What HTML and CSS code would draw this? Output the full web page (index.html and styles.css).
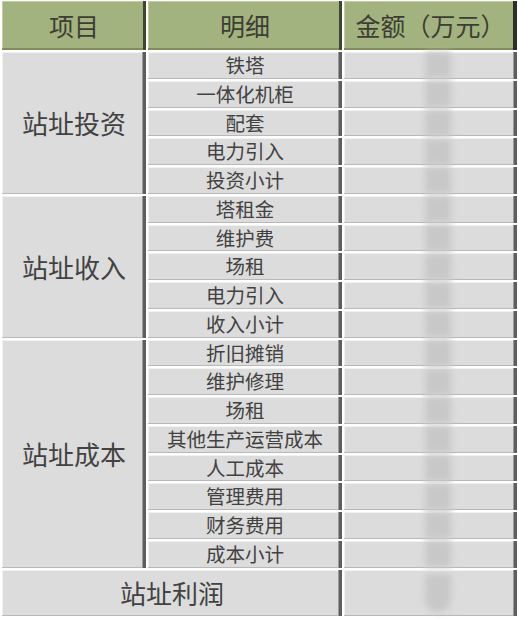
FILE: index.html
```html
<!DOCTYPE html>
<html lang="zh">
<head>
<meta charset="utf-8">
<title>站址收益</title>
<link rel="stylesheet" href="styles.css">
</head>
<body>
<div class="sheet">
  <div class="cell head">项目</div>
  <div class="cell head">明细</div>
  <div class="cell head last">金额（万元）</div>

  <div class="cell group g1">站址投资</div>
  <div class="cell item">铁塔</div><div class="cell val"><span class="redact"></span></div>
  <div class="cell item">一体化机柜</div><div class="cell val"><span class="redact"></span></div>
  <div class="cell item">配套</div><div class="cell val"><span class="redact"></span></div>
  <div class="cell item">电力引入</div><div class="cell val"><span class="redact"></span></div>
  <div class="cell item">投资小计</div><div class="cell val"><span class="redact"></span></div>

  <div class="cell group g2">站址收入</div>
  <div class="cell item">塔租金</div><div class="cell val"><span class="redact"></span></div>
  <div class="cell item">维护费</div><div class="cell val"><span class="redact"></span></div>
  <div class="cell item">场租</div><div class="cell val"><span class="redact"></span></div>
  <div class="cell item">电力引入</div><div class="cell val"><span class="redact"></span></div>
  <div class="cell item">收入小计</div><div class="cell val"><span class="redact"></span></div>

  <div class="cell group g3">站址成本</div>
  <div class="cell item">折旧摊销</div><div class="cell val"><span class="redact"></span></div>
  <div class="cell item">维护修理</div><div class="cell val"><span class="redact"></span></div>
  <div class="cell item">场租</div><div class="cell val"><span class="redact"></span></div>
  <div class="cell item">其他生产运营成本</div><div class="cell val"><span class="redact"></span></div>
  <div class="cell item">人工成本</div><div class="cell val"><span class="redact"></span></div>
  <div class="cell item">管理费用</div><div class="cell val"><span class="redact"></span></div>
  <div class="cell item">财务费用</div><div class="cell val"><span class="redact"></span></div>
  <div class="cell item">成本小计</div><div class="cell val"><span class="redact"></span></div>

  <div class="cell total">站址利润</div>
  <div class="cell val"><span class="redact tall"></span></div>
</div>
</body>
</html>
```

FILE: styles.css
```css
html, body {
  margin: 0;
  padding: 0;
  background: #ffffff;
}

body {
  font-family: "Noto Sans CJK SC", "Noto Sans", sans-serif;
  color: #424242;
  width: 519px;
  height: 619px;
  overflow: hidden;
}

.sheet {
  display: grid;
  grid-template-columns: 144px 194px 173px;
  grid-template-rows: 49px repeat(18, 26.75px) 46px;
  gap: 2px;
  padding: 1px 0 0 2px;
}

.cell {
  display: flex;
  align-items: center;
  justify-content: center;
  background: #dcdcdc;
  box-shadow:
    inset -3px 0 0 #5e5e5e,
    inset -4px 0 0 #9a9a9a,
    inset 0 -1px 0 #b8b8b8,
    inset 1px 1px 0 #f2f2f2;
  line-height: 1;
  white-space: nowrap;
}

.head {
  background: #a3b37f;
  font-size: 25px;
  color: #3c3d35;
  box-shadow:
    inset -3px 0 0 #3e4530,
    inset 0 -2px 0 #7f8d5c,
    inset 1px 1px 0 #c2cea0;
}

.head.last {
  box-shadow:
    inset -4px 0 0 #2c2f26,
    inset 0 -2px 0 #7f8d5c,
    inset 1px 1px 0 #c2cea0;
}

.group {
  font-size: 26px;
  grid-column: 1;
}

.g1 { grid-row: 2 / span 5; }
.g2 { grid-row: 7 / span 5; }
.g3 { grid-row: 12 / span 8; }

.item {
  font-size: 19.5px;
  padding-bottom: 1px;
}

.total {
  grid-column: 1 / span 2;
  font-size: 26px;
}

.val {
  position: relative;
}

.redact {
  display: block;
  width: 26px;
  height: 26px;
  margin-left: 14px;
  background: #c8c8c8;
  filter: blur(3px);
}

.redact.tall {
  height: 38px;
  border-radius: 0 0 14px 14px;
}
```
